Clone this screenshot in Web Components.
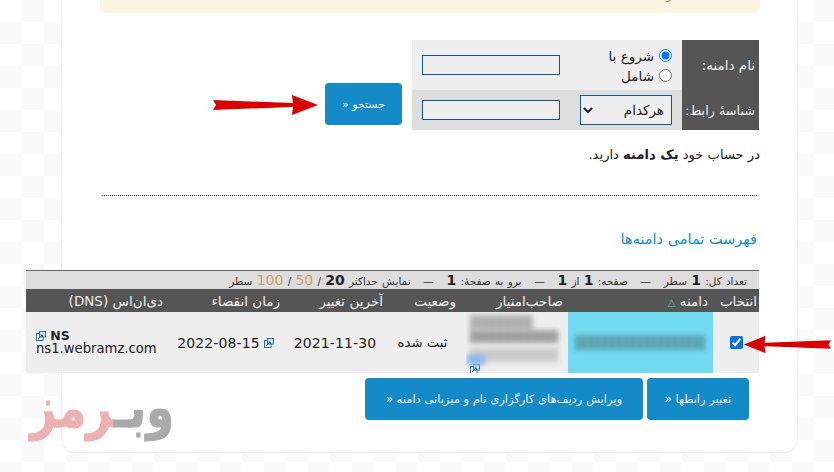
<!DOCTYPE html>
<html lang="fa">
<head>
<meta charset="utf-8">
<title>دامنه‌ها</title>
<style>
html,body{margin:0;padding:0;height:472px;overflow:hidden}
body{font-family:"DejaVu Sans",sans-serif;color:#222;
background-color:#fff;
background-image:conic-gradient(#f9f9f9 25%,#fff 0 50%,#fafafa 0 75%,#fff 0);
background-size:44px 44px}
</style>
</head>
<body>
<template id="t-arrow">
<style>:host{position:absolute;display:block;line-height:0}svg{display:block;width:100%;height:100%}</style>
<svg xmlns="http://www.w3.org/2000/svg" viewBox="0 0 106 22" preserveAspectRatio="none"><path fill="#d90000" d="M0 6 L79 9 L80 9.5 L79 1 L105 11 L79 21 L80 12.5 L79 13 L0 16 L3 11 Z"/></svg>
</template>

<template id="t-ext">
<style>:host{display:inline-block;line-height:0;vertical-align:-1px}</style>
<svg xmlns="http://www.w3.org/2000/svg" width="10" height="10" viewBox="0 0 10 10"><rect x=".5" y="2.5" width="6.5" height="7" fill="#fff" stroke="#2a6fb5"/><rect x="3.5" y=".5" width="6" height="5.5" fill="#cfe3f7" stroke="#2a6fb5"/><path d="M2 8 L6 4 M4.5 4H6.5V6" fill="none" stroke="#1d5ea8"/></svg>
</template>

<template id="t-btn">
<style>
:host{display:inline-flex;align-items:center;justify-content:center;box-sizing:border-box;height:42px;background:#148ac8;color:#eef;border-radius:4px;font-size:11.5px;letter-spacing:.5px;white-space:nowrap}
</style>
<slot></slot>
</template>

<template id="t-search">
<style>
:host{display:flex;direction:rtl;gap:10px;height:90px;margin-right:1px;font-family:"DejaVu Sans",sans-serif}
.tbl{width:347px;display:grid;grid-template-columns:77px 122px 148px;grid-template-rows:50px 40px}
.lab{background:#555;color:#eee;font-size:13.5px;display:flex;align-items:center;padding-right:4px;white-space:nowrap}
.c1{background:#eee}.c2{background:#ddd}
.cell{display:flex;align-items:center}
.radios{flex-direction:column;align-items:flex-start;justify-content:center;padding:1px 10px 0 0;box-sizing:border-box;font-size:13.5px;line-height:20px;color:#222}
.radios label{display:flex;align-items:center;gap:5px;height:20px}
input[type=radio]{margin:0;width:13px;height:13px}
input[type=text]{box-sizing:border-box;width:138px;height:20px;background:#eee;border:1px solid #145a84;margin:0;padding:0;border-radius:0;outline:none}
.inp{justify-content:flex-end;padding-left:10px;box-sizing:border-box}
select{box-sizing:border-box;width:92px;height:30px;margin:0 10px 0 0;background:#eee;border:1px solid #145a84;border-radius:0;font:13.5px "DejaVu Sans",sans-serif;color:#222;padding:0 3px}
.b{align-self:flex-end;margin-bottom:5px;width:77px;font-size:11px}
</style>
<div class="tbl">
<div class="lab"><span>نام دامنه:</span></div>
<div class="cell c1 radios"><label><input type="radio" name="m" checked>شروع با</label><label><input type="radio" name="m">شامل</label></div>
<div class="cell c1 inp"><input type="text"></div>
<div class="lab"><span style="font-size:12.8px">شناسهٔ رابط:</span></div>
<div class="cell c2"><select><option>هرکدام</option></select></div>
<div class="cell c2 inp"><input type="text"></div>
</div>
<action-btn class="b">جستجو «</action-btn>
</template>

<template id="t-table">
<style>
:host{display:block;margin:0 1px 0 -74px;width:733px;font-family:"DejaVu Sans",sans-serif;direction:rtl}
.sum{box-sizing:border-box;height:19px;border-top:1px solid #666;background:#ddd;font-size:10.5px;color:#333;display:flex;align-items:center;padding-right:12px;white-space:pre;word-spacing:.9px}
.sum b{font-size:14px;color:#222}
.sum i{font-style:normal;color:#c8a265;font-size:14px}
.head,.row{display:grid;grid-template-columns:46px 145px 102px 81px 100px 115px 144px}
.head{height:23px;background:#555;color:#eee;font-size:13.5px;align-items:center;white-space:nowrap}
.head span{display:block}
.sort{color:#5fc0a8;font-size:10px}
.row{height:61px;background:#eee;align-items:center;font-size:12px;color:#222}
.row>div{height:100%;display:flex;align-items:center;justify-content:center;white-space:nowrap;position:relative;overflow:hidden}
.dom{background:#72daf0}
.blur{position:absolute;filter:blur(2.5px);background:repeating-linear-gradient(90deg,#8d8d8d 0 4px,#a8a8a8 4px 7px)}
.ck{margin:0;width:13px;height:13px;accent-color:#0b6fe0}
.ns{direction:ltr;text-align:left;display:block!important;padding:17px 0 0 10px;box-sizing:border-box;line-height:13px;font-size:13.2px}
.ns b{font-size:12.5px}
.date{direction:ltr;font-size:14px;letter-spacing:.1px;gap:4px}
.mini{position:absolute;left:4px;top:52px}
</style>
<div class="sum"><span>تعداد کل: <b>1</b> سطر   —   صفحه: <b>1</b> از <b>1</b>   —   برو به صفحهٔ: <b>1</b>   —   نمایش حداکثر <b>20</b> / <i>50</i> / <i>100</i> سطر</span></div>
<div class="head">
<span style="padding-right:2px">انتخاب</span>
<span style="padding-right:5px">دامنه <span class="sort" style="display:inline">△</span></span>
<span style="padding-right:5px">صاحب‌امتیاز</span>
<span style="padding-right:10px">وضعیت</span>
<span style="padding-right:2px">آخرین تغییر</span>
<span style="padding-right:5px">زمان انقضاء</span>
<span style="padding-right:7px">دی‌ان‌اس (DNS)</span>
</div>
<div class="row">
<div><input class="ck" type="checkbox" checked></div>
<div class="dom"><div class="blur" style="left:7px;right:8px;top:23px;height:15px;opacity:.8;background:repeating-linear-gradient(90deg,#4f8c9c 0 4px,#6aa6b4 4px 7px)"></div></div>
<div><ext-icon class="mini"></ext-icon><div class="blur" style="left:4px;right:35px;top:3px;height:15px;opacity:.7"></div><div class="blur" style="left:4px;right:10px;top:18px;height:13px;opacity:.9"></div><div class="blur" style="left:4px;right:10px;top:36px;height:14px;opacity:.4"></div><div class="blur" style="left:1px;width:18px;top:43px;height:10px;background:#8ab8ee"></div></div>
<div style="font-size:13.3px;padding-right:6px;box-sizing:border-box">ثبت شده</div>
<div class="date">2021-11-30</div>
<div class="date" style="padding-right:4px;box-sizing:border-box"><span>2022-08-15</span><ext-icon></ext-icon></div>
<div class="ns"><ext-icon></ext-icon> <b>NS</b><br>ns1.webramz.com</div>
</div>
</template>

<template id="t-logo">
<style>
:host{position:absolute;display:block;overflow:hidden;direction:rtl;white-space:nowrap;font:bold 56px/60px "DejaVu Sans",sans-serif;-webkit-text-stroke:1px currentColor}
.in{display:block;margin-top:-22px;transform:scaleX(.8);transform-origin:100% 50%}
.a{color:#aaa}.b{color:#eeb0b0}
</style>
<span class="in"><span class="a">وبـ</span><span class="b">رمز</span></span>
</template>

<script>
const mk=(n,id)=>customElements.define(n,class extends HTMLElement{constructor(){super();this.attachShadow({mode:'open'}).append(document.getElementById(id).content.cloneNode(true))}});
mk('action-btn','t-btn');mk('ext-icon','t-ext');mk('red-arrow','t-arrow');mk('domain-search','t-search');mk('domain-table','t-table');mk('brand-logo','t-logo');
customElements.define('site-card',class extends HTMLElement{constructor(){super();this.attachShadow({mode:'open'}).innerHTML=`<style>
:host{display:block;box-sizing:border-box;margin-left:61px;width:737px;height:453px;background:#fff;border:solid #eee;border-width:0 1px 1px;border-radius:0 0 14px 14px;padding:0 37px 0 38px;direction:rtl;font-family:"DejaVu Sans",sans-serif}
</style><slot></slot>`}});
</script>

<style>
.notice{height:13px;background:#fdf5e2;border-radius:0 0 6px 6px;overflow:hidden;font-size:12px;line-height:14px;color:#b8863b;padding-right:80px}
.notice span{display:block;margin-top:-12px}
domain-search{margin-top:27px}
.own{margin:0;padding-top:18px;font-size:13.1px;line-height:14px;height:14px}
.own b{font-weight:bold}
.rule{margin:33px 3px 0 2px;border:0;border-top:1px dotted #333;height:0}
.lnk{display:block;margin:35px 3px 0 0;font-size:14.5px;line-height:16px;color:#148ac8;text-decoration:none}
domain-table{margin-top:23px}
.acts{display:flex;gap:4px;margin:5px 11px 0 0}
.acts .x{width:102px}.acts .y{width:278px}
</style>
<site-card>
<div class="notice"><span>خواهد شد.</span></div>
<domain-search></domain-search>
<p class="own">در حساب خود <b>یک دامنه</b> دارید.</p>
<hr class="rule">
<a class="lnk" href="#">فهرست تمامی دامنه‌ها</a>
<domain-table></domain-table>
<div class="acts"><action-btn class="x">تغییر رابطها «</action-btn><action-btn class="y">ویرایش ردیف‌های کارگزاری نام و میزبانی دامنه «</action-btn></div>
</site-card>
<red-arrow style="left:213px;top:94px;width:106px;height:22px"></red-arrow>
<red-arrow style="left:743px;top:335px;width:88px;height:19px;transform:scaleX(-1)"></red-arrow>
<brand-logo style="left:24px;top:400px;width:150px;height:47px"></brand-logo>
</body>
</html>
